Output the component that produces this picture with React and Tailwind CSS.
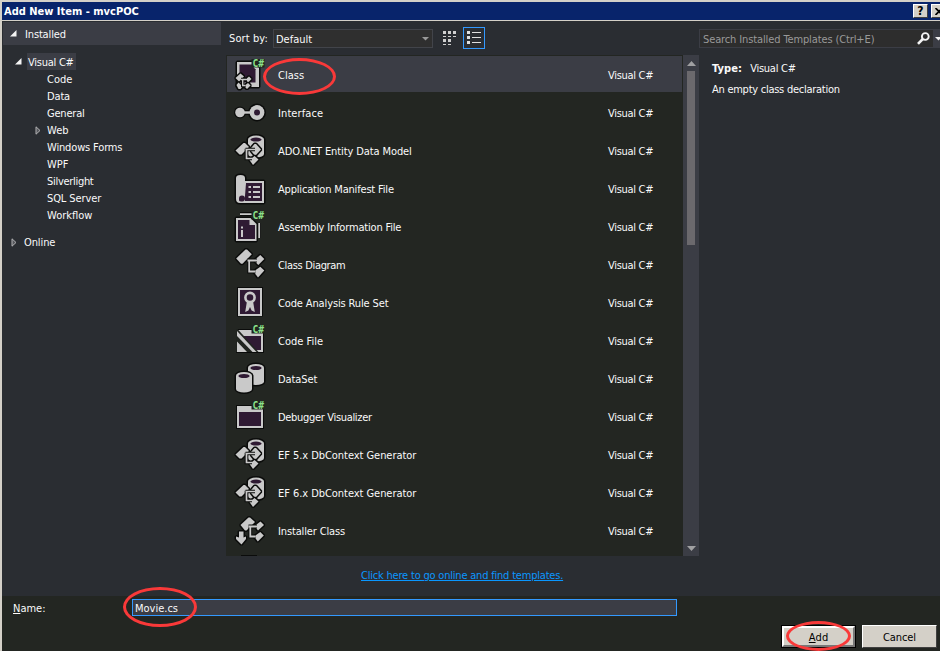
import React from "react";

const L = "#c9c9c9";
const P = "#2f1a33";
const K = "#0b0c0b";

/* Light shape with a dark halo behind it */
function Shape({ d, fill = L }) {
  return <path d={d} fill={fill} stroke={K} strokeWidth="3" strokeLinejoin="bevel" paintOrder="stroke" />;
}

function Wire({ d, w = 1.8 }) {
  return (
    <>
      <path d={d} fill="none" stroke={K} strokeWidth={w + 2} />
      <path d={d} fill="none" stroke={L} strokeWidth={w} />
    </>
  );
}

function Badge() {
  return (
    <g>
      <path d="M17.5 0h13v8.5h-13z" fill="#20241f" />
      <text x="18.4" y="7.6" fontSize="9.6" fontWeight="700" fill="#8ce08a" fontFamily="'DejaVu Sans Mono', monospace">
        C#
      </text>
    </g>
  );
}

function Cylinder({ x, y, w, h }) {
  const r = w / 2;
  const ry = 3.6;
  return (
    <g>
      <Shape d={`M${x} ${y + ry}a${r} ${ry} 0 0 1 ${w} 0v${h - 2 * ry}a${r} ${ry} 0 0 1 ${-w} 0z`} />
      <ellipse cx={x + r} cy={y + ry + 0.4} rx={r - 2.4} ry="2" fill={P} />
    </g>
  );
}

function Nodes() {
  return (
    <g>
      <Shape d="M2.2 9.5l9.3-9h1.500l4.800 4.800-9.300 9.500H7z" />
      <Shape d="M20 11.500l6.300-5.500 4 4-6 6z" />
      <Shape d="M19.500 22.500l6.800-4.700 4 3.700-6.300 7z" />
      <Wire d="M13.500 11.500h9.500M15.200 10.600v11.900h6.300" />
    </g>
  );
}

function DataNodes() {
  return (
    <g>
      <Cylinder x={14} y={0.6} w={16} h={22} />
      <Shape d="M1.500 15.500l8-7.500h1.500l4 4-7.500 7.500H5.500z" />
      <Shape d="M17.500 12.500l3-3.500h1.500l5 5.500-5 5.500h-1.500l-3-3.500z" />
      <Shape d="M15.500 25l5-4 4 3.500-5.500 5.500z" />
      <Wire d="M11.500 14.500h9.500M12.500 13.700v9.800h5.500" w={1.700} />
    </g>
  );
}

const icons = {
  class: (
    <g>
      <Shape d="M3 3h17l5 6v19H3z" />
      <path d="M5.5 5.500h12v5h4v13h-16z" fill={P} />
      <path d="M17 5l5 6h-5z" fill={P} />
      <g transform="translate(0 14)">
        <Shape d="M1.500 5l5-4.500 3.500 3-5 5z" />
        <Shape d="M11.500 6.500l3.500-3 2.500 2.500-3.500 3.500z" />
        <Shape d="M10 13l4-3 2.500 2.500-3.500 3.500z" />
        <Shape d="M2.500 12l2-2.500 4 4-2 2.500H4.500z" />
        <Wire d="M7 6.500h6M8.700 6v6.500h3" w={1.400} />
      </g>
      <Badge />
    </g>
  ),
  interface: (
    <g>
      <circle cx="6" cy="15.5" r="6" fill={K} />
      <circle cx="23" cy="15.5" r="9" fill={K} />
      <path d="M6 15.5h14" stroke={K} strokeWidth="5" />
      <circle cx="6" cy="15.5" r="4.8" fill={L} />
      <circle cx="23" cy="15.5" r="7.4" fill={L} />
      <path d="M8 15.5h10" stroke={L} strokeWidth="2.4" />
      <circle cx="23" cy="15.5" r="3" fill={P} />
    </g>
  ),
  ado: <DataNodes />,
  manifest: (
    <g>
      <Shape d="M2 5q0-3 4.500-3T11 5v3h19v22H6q-4 0-4-4z" />
      <path d="M12 10h16v18H11V23z" fill={P} />
      <path d="M5 25.5q0-3 3-3t3 3-3 3-3-1z" fill={P} />
      <path d="M14.5 14h2.5M19 14h7M14.5 19h2.5M19 19h7M14.500 24h2.5M19 24h7" stroke={L} strokeWidth="2" />
    </g>
  ),
  assembly: (
    <g>
      <path d="M6 3h12M25 12v15" stroke={K} strokeWidth="4" />
      <path d="M6 3.2h12M25.2 12v15" stroke={L} strokeWidth="1.8" />
      <Shape d="M2 7h14.5l6 6v17H2z" />
      <path d="M4 9h12l5 5v14H4z" fill={P} />
      <path d="M15.500 7.500v6.5h6.500z" fill={L} />
      <path d="M8 15.5v2M8 19v7" stroke={L} strokeWidth="2" />
      <Badge />
    </g>
  ),
  diagram: <Nodes />,
  rules: (
    <g>
      <path d="M3 0h26v29.5H3z" fill={K} />
      <path d="M4 1h24v28H4z" fill={L} />
      <path d="M6 3h20v24H6z" fill={P} />
      <path d="M13 14h6l1.8 11-3.2-1.6L16 20l-1.6 3.6-3.2 1.400z" fill={L} />
      <circle cx="16" cy="10.500" r="4.600" fill={P} stroke={L} strokeWidth="2.600" />
    </g>
  ),
  codefile: (
    <g>
      <path d="M2 4h28v24H2z" fill={K} />
      <path d="M3 5h26v22H3z" fill={L} />
      <path d="M5 11h22v14H5z" fill={P} />
      <path d="M2 4h1.500l21 23H2z" fill="#20241f" />
      <path d="M3 6v5l15.500 16h4z" fill={L} />
      <path d="M3 16.500v10.500h10z" fill={L} />
      <Badge />
    </g>
  ),
  dataset: (
    <g>
      <Cylinder x={14} y={1} w={16} h={21} />
      <Cylinder x={2} y={9} w={16} h={20.5} />
    </g>
  ),
  debugger: (
    <g>
      <path d="M2 4h28v24H2z" fill={K} />
      <path d="M3 5h26v22H3z" fill={L} />
      <path d="M5 11h22v14H5z" fill={P} />
      <Badge />
    </g>
  ),
  installer: (
    <g>
      <Shape d="M6.500 10l8-7.500h1.500l5 4.500-8.500 8.500h-1.500z" />
      <Shape d="M20.500 11l6-4.500 3.500 3.500-6 5.500z" />
      <Shape d="M20 21.500l6.300-4.500 3.500 3.500-6 6z" />
      <Wire d="M14.500 11.500h8.500M16.300 10.600v10.900h5.500" />
      <Shape d="M5 16.500h4.500v6l2.500-1v2.500L7.500 29.500 2 24v-2.500l3 1z" />
    </g>
  ),
};

const templates = [
  ["class", "Class", ""],
  ["interface", "Interface", "tracking-[0.1px]"],
  ["ado", "ADO.NET Entity Data Model", "tracking-[-0.1px]"],
  ["manifest", "Application Manifest File", "tracking-[-0.18px]"],
  ["assembly", "Assembly Information File", "tracking-[-0.18px]"],
  ["diagram", "Class Diagram", "tracking-[-0.33px]"],
  ["rules", "Code Analysis Rule Set", "tracking-[-0.13px]"],
  ["codefile", "Code File", ""],
  ["dataset", "DataSet", "tracking-[-0.1px]"],
  ["debugger", "Debugger Visualizer", "tracking-[-0.32px]"],
  ["ado", "EF 5.x DbContext Generator", "tracking-[-0.05px]"],
  ["ado", "EF 6.x DbContext Generator", "tracking-[-0.05px]"],
  ["installer", "Installer Class", "tracking-[-0.14px]"],
];

const categories = [
  ["Code", ""],
  ["Data", "tracking-[-0.15px]"],
  ["General", "tracking-[-0.2px]"],
  ["Web", ""],
  ["Windows Forms", "tracking-[-0.15px]"],
  ["WPF", ""],
  ["Silverlight", "tracking-[-0.3px]"],
  ["SQL Server", "tracking-[-0.1px]"],
  ["Workflow", ""],
];

const Open = () => (
  <svg width="7" height="7" viewBox="0 0 7 7"><path d="M6.5 0v6.5H0z" fill="#f4f4f4" /></svg>
);
const Closed = () => (
  <svg width="6" height="9" viewBox="0 0 6 9"><path d="M1 .8v7.4l4-3.7z" fill="#55575c" stroke="#b0b0b2" strokeWidth="1" /></svg>
);

function Ring({ className }) {
  return <div className={`absolute rounded-[50%] border-3 border-[#f93939] ${className}`} />;
}

export default function App() {
  return (
    <div className="relative flex h-[651px] w-[940px] flex-col overflow-hidden border-t-2 border-l-2 border-[#d4d0c8] bg-[#2a2d32] font-['DejaVu_Sans_Condensed','DejaVu_Sans',sans-serif] text-[11px] leading-[17px] whitespace-nowrap text-[#fafafa] [font-stretch:condensed]">
      <header className="flex h-[19px] shrink-0 items-center border-b border-[#d4d0c8] bg-[#08246b] pl-0.5">
        <h1 className="grow font-bold text-white">Add New Item - mvcPOC</h1>
        <div className="flex shrink-0 gap-[3px]">
          <div className="flex h-[14px] w-[15px] items-center justify-center border border-t-white border-r-[#404040] border-b-[#404040] border-l-white bg-[#d4d0c8] text-[12px] font-bold text-black">?</div>
          <div className="flex h-[14px] w-[9px] items-center overflow-hidden border border-r-0 border-t-white border-b-[#404040] border-l-white bg-[#d4d0c8] pl-[3px]">
            <svg className="shrink-0" width="8" height="7" viewBox="0 0 8 7"><path d="M.5 0l7 7M7.5 0l-7 7" stroke="#000" strokeWidth="1.7" /></svg>
          </div>
        </div>
      </header>

      <main className="flex h-[575px] shrink-0">
        <aside className="w-[224px] shrink-0 pt-px pl-px">
          <div className="flex h-[23px] w-[218px] items-center gap-[8px] bg-[#3b3d45] pl-[7px]"><Open /><span className="pt-px tracking-[-0.15px]">Installed</span></div>
          <div className="mt-[8px] flex h-[17px] items-center pl-[12px]">
            <Open /><span className="ml-[5px] h-[17px] w-[49px] bg-[#3b3d45] pt-px pl-px tracking-[-0.25px]">Visual C#</span>
          </div>
          <ul className="pt-px">
            {categories.map(([n, cls]) => (
              <li key={n} className="flex h-[17px] items-center pl-[32px]">
                <span className="flex w-[12px] shrink-0">{n === "Web" && <Closed />}</span>
                <span className={cls}>{n}</span>
              </li>
            ))}
          </ul>
          <div className="mt-[10px] flex h-[17px] items-center gap-[7px] pl-[8px]"><Closed /><span className="tracking-[-0.1px]">Online</span></div>
        </aside>

        <section className="w-[473px] shrink-0">
          <div className="flex h-[34px] items-start pl-[3px]">
            <span className="mt-[9px] w-[44px] tracking-[0.1px]">Sort by:</span>
            <div className="mt-[8px] flex h-[19px] w-[160px] items-center justify-between border border-[#42444a] bg-[#2f2f2f] pr-[3px] pl-[2px]">
              <span className="pt-px">Default</span>
              <svg width="7" height="4" viewBox="0 0 7 4"><path d="M0 0h7L3.500 3.600z" fill="#999" /></svg>
            </div>
            <svg className="mt-[10px] ml-[10px] shrink-0" width="14" height="15" viewBox="0 0 14 15" fill="#d0d0d0">
              <path d="M0 0h3v3H0zM5 0h3v3H5zM10 0h3v3h-3zM0 5h3v1H0zM5 5h3v1H5zM10 5h3v1h-3zM0 8h3v3H0zM5 8h3v3H5zM0 13h3v1H0zM5 13h3v1H5z" />
            </svg>
            <div className="mt-[6px] ml-[6px] flex h-[22px] w-[22px] shrink-0 items-center justify-center border border-[#3399ff]">
              <svg width="14" height="14" viewBox="0 0 14 14" fill="#e0e0e0">
                <path d="M0 0h3v3H0zM0 5h3v3H0zM0 10h3v3H0zM5 1h9v1H5zM5 6h9v1H5zM5 11h9v1H5z" />
              </svg>
            </div>
          </div>
          <div className="flex h-[501px]">
            <div className="h-[501px] w-[457px] overflow-hidden bg-[#232622] pt-px pl-px">
              {templates.map(([icon, name, cls], i) => (
                <div key={name} className="h-[38px]">
                  <div className={`flex h-[36px] w-[455px] items-start pl-[7px] ${i === 0 ? "bg-[#3b3d45]" : ""}`}>
                    <svg className="mt-[3px] shrink-0 overflow-visible" width="32" height="32" viewBox="0 0 32 32">{icons[icon]}</svg>
                    <span className={`mt-[11px] ml-[12px] w-[330px] ${cls}`}>{name}</span>
                    <span className="mt-[11px] tracking-[-0.3px]">Visual C#</span>
                  </div>
                </div>
              ))}
              <div className="mt-[5px] ml-[14px] h-px w-[16px] bg-[#0b0c0b]" />
            </div>
            <div className="flex w-[16px] flex-col items-center bg-[#3b3d45] pt-[6px] pb-[5px]">
              <svg width="9" height="5" viewBox="0 0 9 5"><path d="M0 5h9L4.5 0z" fill="#a0a0a2" /></svg>
              <div className="mt-[5px] h-[174px] w-[8px] bg-[#6b696d]" />
              <svg className="mt-auto" width="9" height="5" viewBox="0 0 9 5"><path d="M0 0h9L4.5 5z" fill="#a0a0a2" /></svg>
            </div>
          </div>
          <a className="mt-[11px] ml-[135px] block w-fit tracking-[-0.2px] text-[#0a97ff] underline">Click here to go online and find templates.</a>
        </section>

        <section className="flex min-w-0 grow flex-col pt-[8px]">
          <div className="flex h-[19px] shrink-0 bg-[#3b3d45]">
            <div className="flex w-[234px] shrink-0 items-center justify-between border border-r-0 border-[#3b3d45] bg-[#2d2d2d] pr-[3px] pl-[3px] text-[#999]">
              <span className="pt-px tracking-[-0.12px]">Search Installed Templates (Ctrl+E)</span>
              <svg width="13" height="13" viewBox="0 0 13 13" fill="none" stroke="#f4f4f4">
                <circle cx="8.3" cy="4.5" r="3.4" strokeWidth="1.9" /><path d="M5.8 7L1 11.8" strokeWidth="2.6" />
              </svg>
            </div>
            <svg className="mt-[8px] ml-[2px] shrink-0" width="7" height="4" viewBox="0 0 7 4"><path d="M0 0h7L3.500 3.600z" fill="#f4f4f4" /></svg>
          </div>
          <p className="mt-[12px] ml-[13px] tracking-[-0.25px]"><b className="mr-[8px] tracking-[0.1px]">Type:</b>Visual C#</p>
          <p className="mt-[4px] ml-[13px] tracking-[-0.26px]">An empty class declaration</p>
        </section>
      </main>

      <footer className="h-[55px] shrink-0 bg-[#232622] pt-[3px]">
        <div className="flex h-[17px] items-center">
          <label className="w-[130px] pt-px pl-[11px]"><u>N</u>ame:</label>
          <div className="flex h-[17px] w-[545px] items-center border border-[#3399ff] bg-[#3b3d45] pt-px pl-[2px]">Movie.cs</div>
        </div>
        <div className="mt-[9px] flex justify-end gap-[6px] pr-[3px] text-black">
          <button className="h-[23px] w-[75px] border border-black bg-[#d4d0c8]">
            <span className="flex h-[21px] items-center justify-center border-2 border-t-white border-r-[#777] border-b-[#777] border-l-white pt-px"><u>A</u>dd</span>
          </button>
          <button className="flex h-[23px] w-[75px] items-center justify-center border border-t-white border-r-[#404040] border-b-[#404040] border-l-white bg-[#d4d0c8] pt-px tracking-[-0.1px]">Cancel</button>
        </div>
      </footer>

      <Ring className="top-[56px] left-[261px] h-[37px] w-[73px]" />
      <Ring className="top-[585px] left-[121px] h-[40px] w-[74px]" />
      <Ring className="top-[619px] left-[784px] h-[30px] w-[65px]" />
    </div>
  );
}
